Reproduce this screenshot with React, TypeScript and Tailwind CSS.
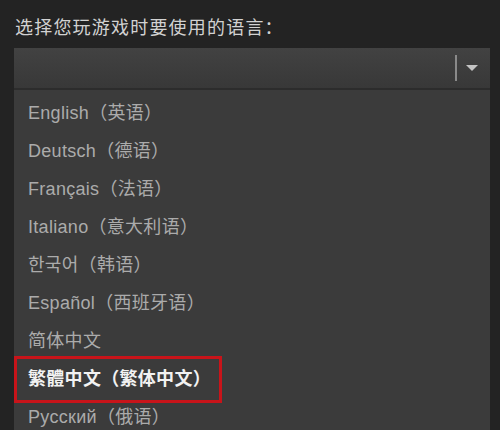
import React from "react";

const items = [
  "English（英语）",
  "Deutsch（德语）",
  "Français（法语）",
  "Italiano（意大利语）",
  "한국어（韩语）",
  "Español（西班牙语）",
  "简体中文",
  "繁體中文（繁体中文）",
  "Русский（俄语）",
];

export default function App() {
  return (
    <div
      className="w-[500px] h-[430px] overflow-hidden bg-[#232323] pt-[17px] pl-[14px] pr-[10px]"
      style={{ fontFamily: '"Liberation Sans", "Noto Sans CJK SC", sans-serif' }}
    >
      <div className="text-[18px] leading-[22px] text-[#d2d2d2] pl-[1px] tracking-[1.2px]">
        选择您玩游戏时要使用的语言：
      </div>
      <div className="mt-[9px] h-[42px] bg-gradient-to-b from-[#424242] to-[#383838] border-b-2 border-[#2c2c2c] flex items-center justify-end pr-[12px]">
        <div className="w-[2px] h-[26px] bg-[#8a8a8a] mr-[9px]" />
        <svg width="12" height="7" viewBox="0 0 12 7">
          <polygon points="0,0 12,0 6,6" fill="#c4c4c4" />
        </svg>
      </div>
      <div className="bg-[#3b3b3b] pt-[4px] h-[400px]">
        {items.map((t, i) => (
          <div
            key={t}
            className={
              "relative h-[38px] flex items-center pl-[14px] text-[18px] tracking-[0.3px] " +
              (i === 7 ? "text-[#f2f2f2] font-semibold" : "text-[#ababab]")
            }
          >
            {t}
            {i === 7 && (
              <div className="absolute left-0 top-[-4px] w-[208px] h-[47px] border-[3px] border-[#c8141a]" />
            )}
          </div>
        ))}
      </div>
    </div>
  );
}
